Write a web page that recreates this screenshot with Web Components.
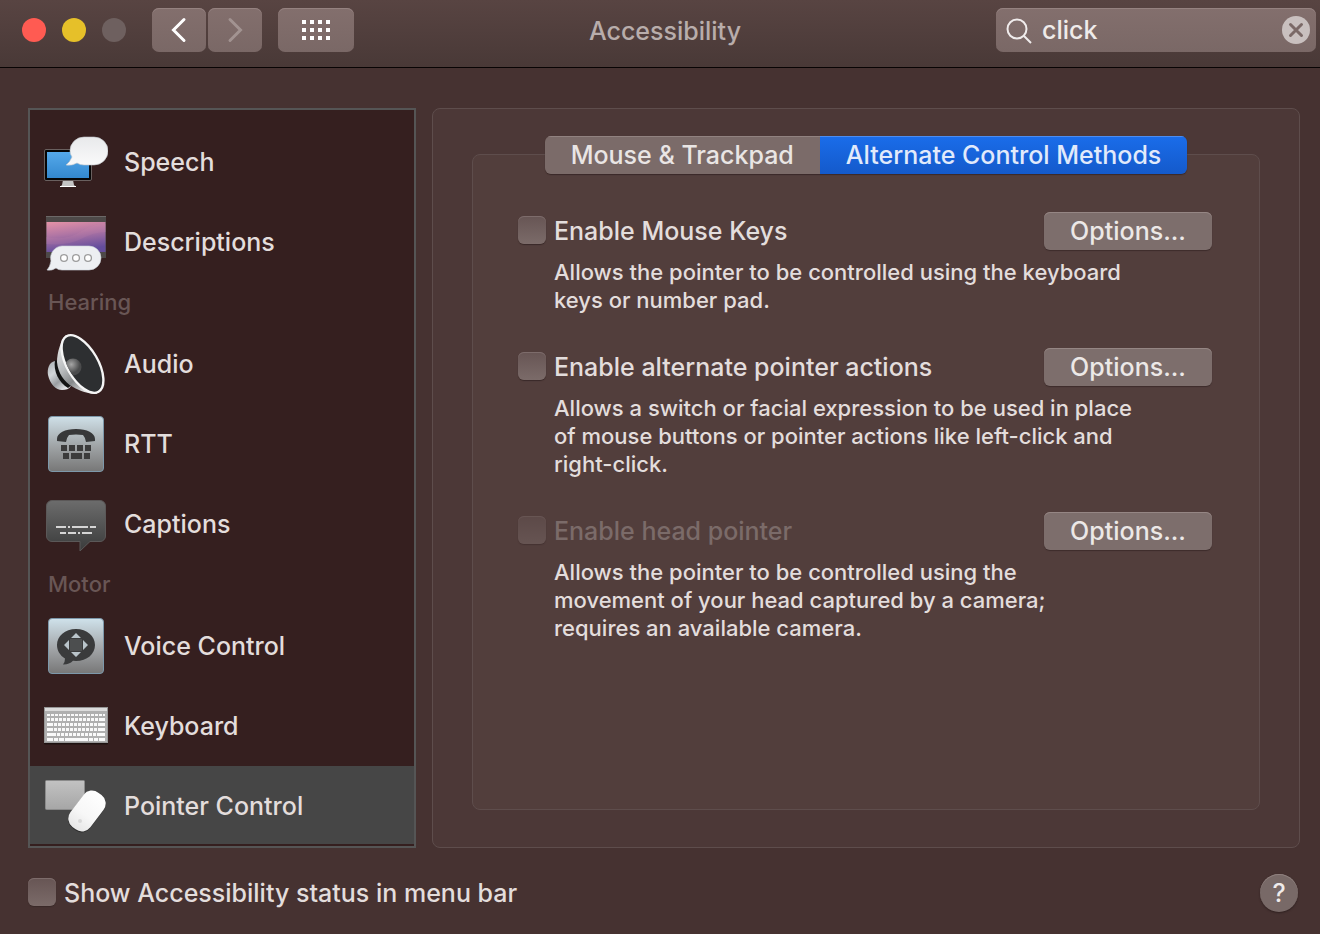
<!DOCTYPE html>
<html lang="en">
<head>
<meta charset="utf-8">
<title>Accessibility</title>
<style>
  body {
    margin: 0;
    background: #463231;
    color: #e3dddc;
    font: 500 25px/32px Inter, "Liberation Sans", sans-serif;
    --control: #7b6b69;
    --edge: #5e4d4c;
  }
</style>
</head>
<body>
<pref-window>
  <title-bar slot="bar" heading="Accessibility" query="click"></title-bar>

  <side-list slot="side">
    <side-item icon="speech">Speech</side-item>
    <side-item icon="descriptions">Descriptions</side-item>
    <side-heading>Hearing</side-heading>
    <side-item icon="audio">Audio</side-item>
    <side-item icon="rtt">RTT</side-item>
    <side-item icon="captions">Captions</side-item>
    <side-heading>Motor</side-heading>
    <side-item icon="voice">Voice Control</side-item>
    <side-item icon="keyboard">Keyboard</side-item>
    <side-item icon="pointer" selected>Pointer Control</side-item>
  </side-list>

  <tab-panel first="Mouse &amp; Trackpad" second="Alternate Control Methods">
    <option-row label="Enable Mouse Keys">Allows the pointer to be controlled using the keyboard<br>keys or number pad.</option-row>
    <option-row label="Enable alternate pointer actions">Allows a switch or facial expression to be used in place<br>of mouse buttons or pointer actions like left-click and<br>right-click.</option-row>
    <option-row label="Enable head pointer" disabled>Allows the pointer to be controlled using the<br>movement of your head captured by a camera;<br>requires an available camera.</option-row>
  </tab-panel>

  <check-box slot="foot" label="Show Accessibility status in menu bar"></check-box>
  <help-button slot="foot"></help-button>
</pref-window>

<script>
// each drawing sits in a 64 x 64 box
const ICONS = {
  speech: `
    <defs>
      <linearGradient id="scr" x1="0" y1="0" x2="0" y2="1"><stop offset="0" stop-color="#55a9ea"/><stop offset="1" stop-color="#3388cf"/></linearGradient>
      <linearGradient id="bub" x1="0" y1="0" x2="0" y2="1"><stop offset="0" stop-color="#e8e9eb"/><stop offset="1" stop-color="#fafafa"/></linearGradient>
    </defs>
    <path d="M19 50h10l1 5 2 2H16l2-2z" fill="#c4c4c4"/><path d="M16 56h16v1H16z" fill="#fff"/>
    <rect x=".5" y="19.5" width="47" height="31" rx="1.5" fill="#060606" stroke="#69605f"/>
    <rect x="3" y="22" width="42" height="26" fill="url(#scr)"/>
    <path d="M40 7h10a14 14 0 0 1 0 28H40q-4 0-7-2-5 3-11 2 4-3 6-8-2-3-2-6A14 14 0 0 1 40 7z" fill="url(#bub)" stroke="#bfc4c9" stroke-width=".6"/>`,
  descriptions: `
    <defs>
      <linearGradient id="sky" x1="0" y1="0" x2=".25" y2="1"><stop offset="0" stop-color="#e592a6"/><stop offset=".45" stop-color="#b176a4"/><stop offset="1" stop-color="#644d9d"/></linearGradient>
    </defs>
    <rect x="2" y="6" width="60" height="42" fill="#4d4948"/>
    <path d="M2 6.5h60" stroke="#6c6867"/>
    <rect x="2.5" y="12" width="59" height="30" fill="url(#sky)"/>
    <path d="M2 27q20 4 34-5t26-8v8q-12 0-25 7T2 34z" fill="#d18bb1" opacity=".15"/>
    <path d="M18 36h27a12 12 0 0 1 0 24H18q-4 0-6-2-4 3-9 2 3-3 4-9a12 12 0 0 1 11-15z" fill="#edeff2" stroke="#cbd1d8" stroke-width=".6"/>
    <g fill="#fff" stroke="#9b9b9b" stroke-width="1.3"><circle cx="20" cy="48" r="3.4"/><circle cx="32" cy="48" r="3.4"/><circle cx="44" cy="48" r="3.4"/></g>`,
  audio: `
    <defs>
      <linearGradient id="horn" x1="0" y1="0" x2=".6" y2="1"><stop offset="0" stop-color="#f4f4f4"/><stop offset=".5" stop-color="#b9bcbe"/><stop offset=".75" stop-color="#85888a"/><stop offset="1" stop-color="#e0e0e0"/></linearGradient>
      <linearGradient id="magnet" x1="0" y1="0" x2=".7" y2="1"><stop offset="0" stop-color="#a5abaf"/><stop offset=".4" stop-color="#d3d7da"/><stop offset=".7" stop-color="#9a9ea2"/><stop offset="1" stop-color="#e6e8ea"/></linearGradient>
      <radialGradient id="cap" cx=".4" cy=".35"><stop offset="0" stop-color="#a6a6a6"/><stop offset="1" stop-color="#4a4b4c"/></radialGradient>
      <clipPath id="rim"><ellipse cx="38.5" cy="32" rx="14.500" ry="31" transform="rotate(-30 38.500 32)"/></clipPath>
    </defs>
    <path d="M11 29C5 30 3 37 4 43c2 9 8 15 14 15 4 0 7-1 9-4L14 34z" fill="url(#magnet)"/>
    <path d="M11 28c-2 11 4 23 13 28l4-3-14-24z" fill="#121313"/>
    <path d="M22 3c-5 4-9 18-9 27 1 11 7 20 16 25 7 4 15 7 24 7z" fill="url(#horn)"/>
    <ellipse cx="38.5" cy="32" rx="15.5" ry="32" transform="rotate(-30 38.500 32)" fill="#2d2f31" stroke="#f5f5f5" stroke-width="2.4"/>
    <circle cx="29" cy="35" r="8.500" fill="url(#cap)" clip-path="url(#rim)"/>`,
  rtt: `
    <defs><linearGradient id="tile" x1="0" y1="0" x2="0" y2="1"><stop offset="0" stop-color="#cfe0e8"/><stop offset=".55" stop-color="#9fa3a5"/><stop offset="1" stop-color="#777"/></linearGradient></defs>
    <rect x="4.5" y="4.5" width="55" height="55" rx="3.5" fill="url(#tile)" stroke="#7d98aa"/>
    <path d="M13 27c0-6 8-10 19-10s19 4 19 10v2l-9 1q-1-5-3-7-7-1-14 0-2 2-3 7l-9-1z" fill="#373839"/>
    <path d="M17 33h6v6h-6zM25 33h6v6h-6zM33 33h6v6h-6zM41 33h6v6h-6zM19 41h6v6h-6zM27 41h11v6H27zM40 41h6v6h-6z" fill="#3b3b3b"/>`,
  captions: `
    <defs><linearGradient id="cc" x1="0" y1="0" x2="0" y2="1"><stop offset="0" stop-color="#6c6c6c"/><stop offset="1" stop-color="#3a3b3b"/></linearGradient></defs>
    <path d="M8 8.5h48a5.500 5.500 0 0 1 5.500 5.500v30a5.500 5.500 0 0 1-5.500 5.500H46L36 59v-9.500H8A5.500 5.500 0 0 1 2.500 44V14A5.500 5.500 0 0 1 8 8.500z" fill="url(#cc)" stroke="#5b5858"/>
    <path d="M12 35h10M24 35h2M28 35h16M46 35h6M16 41h6M24 41h8M34 41h2M38 41h10" stroke="#d5d5d5" stroke-width="2"/>`,
  voice: `
    <defs><linearGradient id="tile" x1="0" y1="0" x2="0" y2="1"><stop offset="0" stop-color="#cfe2eb"/><stop offset=".55" stop-color="#a2a5a8"/><stop offset="1" stop-color="#777"/></linearGradient></defs>
    <rect x="4.5" y="4.5" width="55" height="55" rx="3.5" fill="url(#tile)" stroke="#7d98aa"/>
    <path d="M32 15c11 0 19 7 19 16s-8 16-19 16l-3-.2q-4 4-10 3.700 2-2 2-6c-5-3-8-8-8-13.500C13 22 21 15 32 15z" fill="#3a3b3c"/>
    <path d="M32 19l5 5H27zM32 43l5-5H27zM20 31l5-5v10zM44 31l-5-5v10z" fill="#b9c4ca"/>
    <rect x="26" y="25" width="12" height="12" fill="#4c4e4f"/>`,
  keyboard: `
    <rect x="0" y="14" width="64" height="36.5" rx="1" fill="#1e1211"/>
    <rect x=".5" y="13.5" width="63" height="35" fill="#b0b0b0" stroke="#979797"/>
    <path d="M1 15.5h62" stroke="#dcdcdc" stroke-width="3"/>
    <g stroke="#fafafa" stroke-width="3" stroke-dasharray="3 1">
      <path d="M3 21h58" stroke-width="2"/>
      <path d="M3 25.5h51M10 30.5h44M10 35.5h43M13 40.5h39"/>
      <path d="M55 25.5h6M3 30.5h6M54 30.5h7M3 35.5h6M54 35.5h7M3 40.5h9M53 40.5h8M3 45.500h6M10 45.500h4M15 45.500h5M21 45.500h23M45 45.500h4M50 45.500h4M55 45.500h6" stroke-dasharray="none"/>
    </g>`,
  pointer: `
    <defs>
      <linearGradient id="pad" x1="0" y1="0" x2="0" y2="1"><stop offset="0" stop-color="#c2c2c2"/><stop offset="1" stop-color="#a6a6a6"/></linearGradient>
      <linearGradient id="mouse" x1="0" y1="0" x2="0" y2="1"><stop offset="0" stop-color="#fff"/><stop offset=".6" stop-color="#f7f7f7"/><stop offset="1" stop-color="#e6e6e6"/></linearGradient>
    </defs>
    <rect x="1.5" y="6.5" width="39" height="29" rx="1" fill="url(#pad)" stroke="#8b8b8b"/>
    <rect x="30.5" y="15.5" width="25" height="44" rx="10.5" transform="rotate(37 43 37.500)" fill="#2c2c2c"/>
    <rect x="30.5" y="15.5" width="25" height="43" rx="10.5" transform="rotate(37 43 37)" fill="url(#mouse)"/>
    <circle cx="36" cy="47" r="2" fill="#d8d8d8"/>`
};

class BaseElement extends HTMLElement {
  constructor() {
    super();
    this.attachShadow({ mode: 'open' });
  }

  connectedCallback() {
    this.shadowRoot.innerHTML = `<style>* { box-sizing: border-box; }</style>` + this.render();
  }

  attr(name) {
    return (this.getAttribute(name) || '').replace(/&/g, '&amp;');
  }
}

class PrefWindow extends BaseElement {
  render() {
    return `
    <style>
      :host { display: flex; flex-direction: column; min-height: 100vh; }
      main {
        flex: 1;
        display: grid;
        grid-template-columns: 388px 1fr;
        gap: 16px;
        padding: 40px 20px 0 28px;
      }
      footer {
        display: flex;
        align-items: center;
        justify-content: space-between;
        padding: 26px 22px 22px 28px;
      }
    </style>
    <slot name="bar"></slot>
    <main><slot name="side"></slot><slot></slot></main>
    <footer><slot name="foot"></slot></footer>`;
  }
}

class TitleBar extends BaseElement {
  render() {
    return `
    <style>
      header {
        display: flex;
        align-items: center;
        height: 68px;
        padding: 0 4px 8px 22px;
        background: linear-gradient(#584442, #493937);
        border-bottom: 1px solid #080404;
      }
      .lights { display: flex; gap: 16px; margin-right: 26px; }
      .lights button { width: 24px; height: 24px; padding: 0; border: 0; border-radius: 50%; }
      .close { background: #ff5b52; }
      .min { background: #e6c029; }
      .max { background: #6e605f; }
      .nav { display: flex; gap: 2px; margin-right: 16px; }
      .tool, .search {
        height: 44px;
        border: 0;
        border-radius: 7px;
        background: linear-gradient(#836f6d, #7a6866);
        box-shadow: inset 0 1px #958280;
      }
      .tool { display: grid; place-items: center; width: 54px; padding: 0; }
      .grid { width: 76px; }
      h1 {
        flex: 1;
        margin: 0;
        padding: 2px 20px 0 0;
        text-align: center;
        font: inherit;
        color: #b8adab;
      }
      .search { display: flex; align-items: center; width: 320px; padding: 0 6px 0 10px; }
      .search input {
        flex: 1;
        min-width: 0;
        height: 32px;
        padding: 0 8px 0 10px;
        border: 0;
        outline: 0;
        background: none;
        color: #efebea;
        font: inherit;
      }
      .search button { width: 28px; height: 28px; padding: 0; border: 0; background: none; }
      svg { display: block; }
    </style>
    <header>
      <div class="lights">
        <button class="close" aria-label="Close"></button>
        <button class="min" aria-label="Minimize"></button>
        <button class="max" aria-label="Zoom" disabled></button>
      </div>
      <div class="nav">
        <button class="tool" aria-label="Back">
          <svg width="24" height="28" fill="none" stroke="#fff" stroke-width="3" stroke-linecap="round"><path d="M17 3.500L6.500 14 17 24.500"/></svg>
        </button>
        <button class="tool" aria-label="Forward" disabled>
          <svg width="24" height="28" fill="none" stroke="#a29391" stroke-width="3" stroke-linecap="round"><path d="M7 3.500L17.500 14 7 24.500"/></svg>
        </button>
      </div>
      <button class="tool grid" aria-label="Show All">
        <svg width="28" height="20" stroke="#fff" stroke-width="4" stroke-dasharray="4 4"><path d="M0 2h28M0 10h28M0 18h28"/></svg>
      </button>
      <h1>${this.attr('heading')}</h1>
      <div class="search">
        <svg width="26" height="28" fill="none" stroke="#f0ecec" stroke-width="2"><circle cx="11" cy="13" r="9.500"/><path d="M18 20l7 7"/></svg>
        <input type="text" aria-label="Search" value="${this.attr('query')}">
        <button aria-label="Clear">
          <svg width="28" height="28"><circle cx="14" cy="14" r="14" fill="#c9c0bf"/><path d="M8.500 8.500l11 11M19.500 8.500l-11 11" stroke="#7b6967" stroke-width="3" stroke-linecap="round"/></svg>
        </button>
      </div>
    </header>`;
  }
}

class SideList extends BaseElement {
  render() {
    return `
    <style>
      :host {
        display: block;
        box-sizing: border-box;
        padding-top: 12px;
        background: #351f1f;
        border: 2px solid #555555;
      }
    </style>
    <nav><slot></slot></nav>`;
  }
}

class SideHeading extends BaseElement {
  render() {
    return `
    <style>
      :host { display: block; padding: 4px 18px 6px; color: #695655; font-size: 22px; }
    </style>
    <slot></slot>`;
  }
}

class SideItem extends BaseElement {
  render() {
    return `
    <style>
      :host { display: block; }
      :host([selected]) { background: #464646; box-shadow: inset 0 -2px #351f1f; }
      a {
        display: flex;
        align-items: center;
        gap: 16px;
        height: 80px;
        padding: 0 14px;
        color: inherit;
        text-decoration: none;
      }
    </style>
    <a href="#">
      <svg width="64" height="64" viewBox="0 0 64 64" aria-hidden="true">${ICONS[this.getAttribute('icon')]}</svg>
      <span><slot></slot></span>
    </a>`;
  }
}

class TabPanel extends BaseElement {
  render() {
    return `
    <style>
      :host {
        display: flex;
        flex-direction: column;
        box-sizing: border-box;
        padding: 27px 39px 37px;
        background: #4c3837;
        border: 1px solid var(--edge);
        border-radius: 8px;
      }
      /* the tabs straddle the top edge of the box below */
      .tabs {
        display: flex;
        align-self: center;
        z-index: 1;
        margin-bottom: -20px;
        border-radius: 6px;
        overflow: hidden;
        box-shadow: 0 1px 1px #3a2928;
      }
      button {
        height: 38px;
        padding: 0 26px;
        border: 0;
        background: var(--control);
        box-shadow: inset 0 1px #918280;
        color: #e9e5e4;
        font: inherit;
      }
      button[aria-selected=true] {
        background: linear-gradient(#1a6dea, #145acb);
        box-shadow: inset 0 1px #4c8df0;
        color: #e1eafb;
      }
      .box {
        flex: 1;
        display: flex;
        flex-direction: column;
        gap: 34px;
        padding: 57px 47px 47px 45px;
        background: #523e3c;
        border: 1px solid var(--edge);
        border-radius: 8px;
      }
    </style>
    <div class="tabs" role="tablist">
      <button role="tab" aria-selected="false">${this.attr('first')}</button>
      <button role="tab" aria-selected="true">${this.attr('second')}</button>
    </div>
    <div class="box" role="tabpanel"><slot></slot></div>`;
  }
}

class CheckBox extends BaseElement {
  render() {
    return `
    <style>
      :host { display: block; }
      label { display: flex; gap: 8px; }
      input {
        appearance: none;
        flex: none;
        width: 28px;
        height: 28px;
        margin: 1px 0 0;
        border-radius: 6px;
        background: linear-gradient(#675554, #7b6b69);
        box-shadow: inset 0 1px #7d6c6b, 0 1px 1px #392928;
      }
      :host([disabled]) label { color: #7b6b69; }
      :host([disabled]) input { opacity: .5; }
    </style>
    <label><input type="checkbox" ${this.hasAttribute('disabled') ? 'disabled' : ''}><span>${this.attr('label')}</span></label>`;
  }
}

class OptionRow extends BaseElement {
  render() {
    return `
    <style>
      :host { display: block; }
      .head { display: flex; align-items: center; justify-content: space-between; }
      button {
        width: 168px;
        height: 38px;
        padding: 0;
        border: 0;
        border-radius: 6px;
        background: #7d6e6c;
        box-shadow: inset 0 1px #958684, 0 1px 1px #3d2c2b;
        color: #ece8e7;
        font: inherit;
      }
      p { margin: 8px 0 0 36px; font-size: 22px; line-height: 28px; }
    </style>
    <div class="head">
      <check-box label="${this.attr('label')}" ${this.hasAttribute('disabled') ? 'disabled' : ''}></check-box>
      <button>Options...</button>
    </div>
    <p><slot></slot></p>`;
  }
}

class HelpButton extends BaseElement {
  render() {
    return `
    <style>
      button {
        display: block;
        width: 38px;
        height: 38px;
        padding: 0;
        border: 0;
        border-radius: 50%;
        background: #786967;
        box-shadow: inset 0 1px #8f807e, 0 1px 2px #2f2020;
        color: #efebea;
        font: inherit;
      }
    </style>
    <button>?</button>`;
  }
}

customElements.define('pref-window', PrefWindow);
customElements.define('title-bar', TitleBar);
customElements.define('side-list', SideList);
customElements.define('side-heading', SideHeading);
customElements.define('side-item', SideItem);
customElements.define('tab-panel', TabPanel);
customElements.define('check-box', CheckBox);
customElements.define('option-row', OptionRow);
customElements.define('help-button', HelpButton);
</script>
</body>
</html>
